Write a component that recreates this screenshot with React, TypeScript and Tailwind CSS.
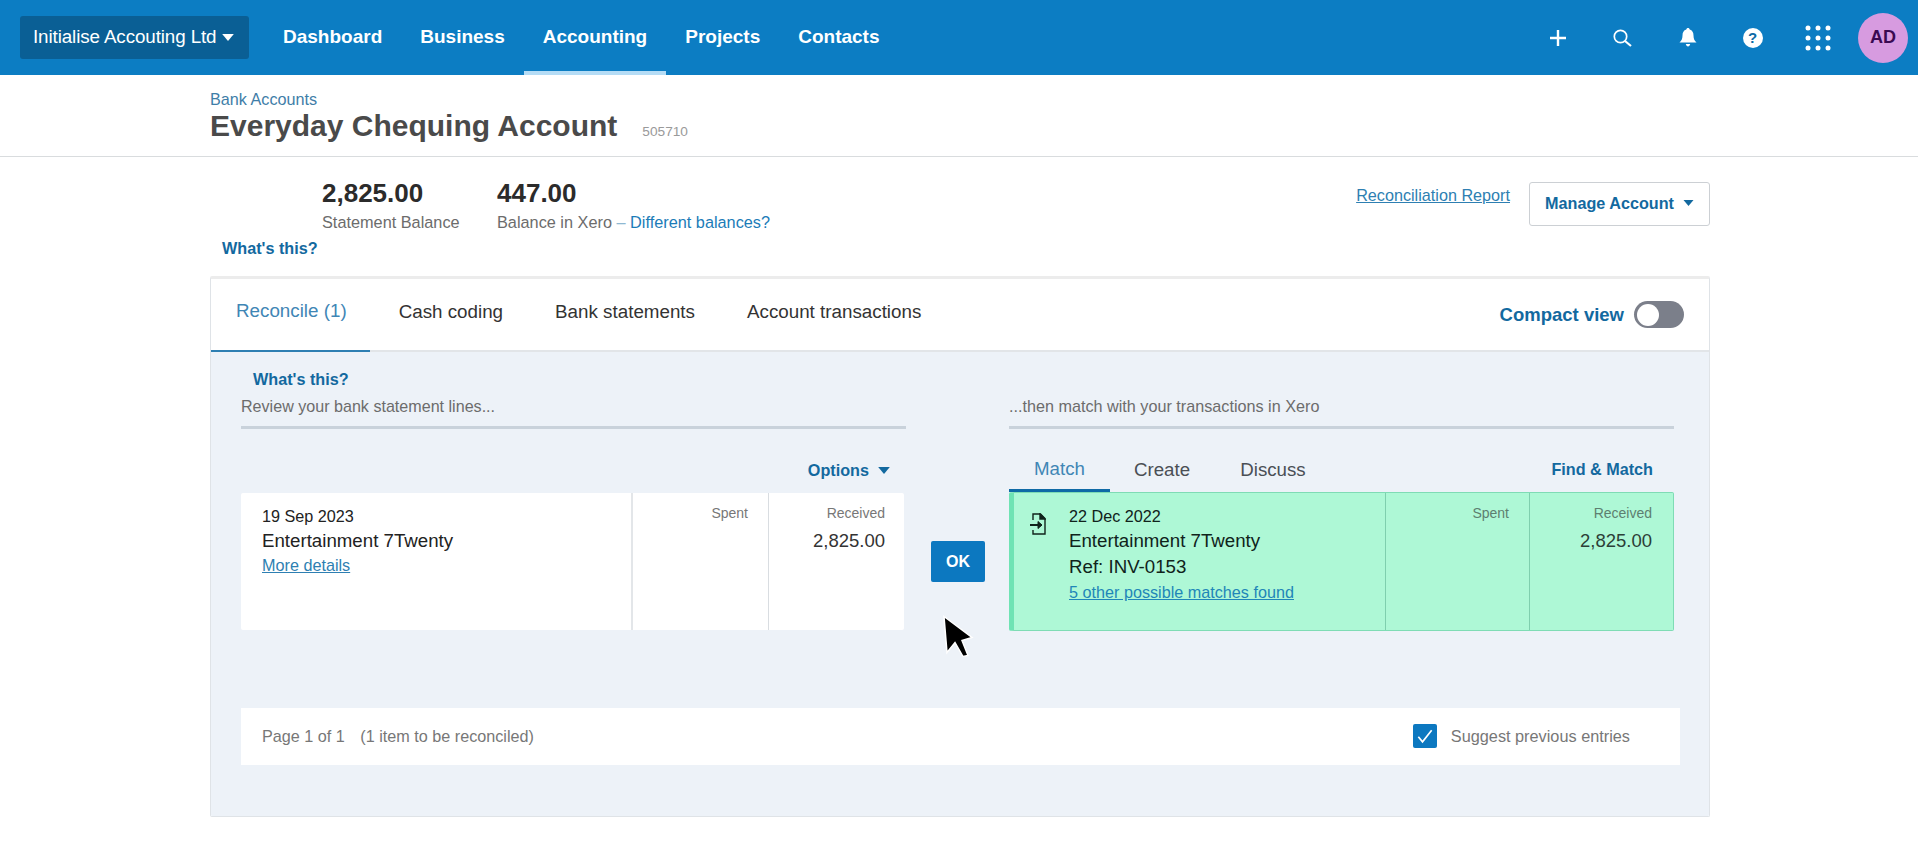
const font = "font-['Liberation_Sans',Arial,sans-serif]";

function Caret({ className }: { className: string }) {
  return (
    <svg viewBox="0 0 10 6" className={className} fill="currentColor">
      <path d="M0 0h10L5 6z" />
    </svg>
  );
}

function PlusIcon() {
  return (
    <svg viewBox="0 0 16 16" className="h-4 w-4" stroke="#fff" strokeWidth="2.4">
      <path d="M8 0v16M0 8h16" />
    </svg>
  );
}

function SearchIcon() {
  return (
    <svg viewBox="0 0 20 18" className="h-[18px] w-5" fill="none" stroke="#fff">
      <circle cx="7.5" cy="7.5" r="6.200" strokeWidth="1.700" />
      <path d="M12 12l6 5" strokeWidth="2.200" />
    </svg>
  );
}

function BellIcon() {
  return (
    <svg viewBox="0 0 18 19" className="h-[19px] w-[18px]" fill="#fff">
      <path d="M9 0c1 0 1.6.6 1.7 1.6C13.300 2.400 14.500 4.600 14.500 7.500c0 3 .8 5 3 7H.5c2.200-2 3-4 3-7 0-2.900 1.200-5.100 3.800-5.900C7.400.6 8 0 9 0z" />
      <path d="M6.800 16h4.400c-.3 1.500-1.100 2.500-2.200 2.500S7.100 17.500 6.800 16z" />
    </svg>
  );
}

function HelpIcon() {
  return (
    <div className="flex h-[20px] w-[20px] items-center justify-center rounded-full bg-white text-[15px] font-bold leading-none text-[#0c6aa6]">
      ?
    </div>
  );
}

function GridDots() {
  const dots = [3, 13, 23];
  return (
    <svg viewBox="0 0 26 26" className="h-[26px] w-[26px]" fill="#fff">
      {dots.map((y) =>
        dots.map((x) => <circle key={`${x}-${y}`} cx={x} cy={y} r="2.5" />)
      )}
    </svg>
  );
}

function TopNav() {
  const items = ["Dashboard", "Business", "Accounting", "Projects", "Contacts"];
  return (
    <header className="flex h-[75px] items-center bg-[#0c7dc3] pl-5 pr-[10px] text-white">
      <button className="flex h-[43px] w-[229px] items-center gap-[6px] rounded-[3px] bg-[#0a5f95] pl-[13px] text-[18.800px] tracking-[-0.1px]">
        <span>Initialise Accouting Ltd</span>
        <Caret className="h-[7px] w-[12px]" />
      </button>
      <nav className="ml-[15px] flex h-full">
        {items.map((item) => (
          <a
            key={item}
            className={`flex h-full items-center border-b-4 px-[19px] pt-1 text-[19px] font-bold ${
              item === "Accounting" ? "border-[#b5dcf5]" : "border-transparent"
            }`}
          >
            {item}
          </a>
        ))}
      </nav>
      <div className="ml-auto flex items-center">
        <div className="flex w-[65px] justify-center">
          <PlusIcon />
        </div>
        <div className="flex w-[65px] justify-center">
          <SearchIcon />
        </div>
        <div className="flex w-[65px] justify-center">
          <BellIcon />
        </div>
        <div className="flex w-[65px] justify-center">
          <HelpIcon />
        </div>
        <div className="flex w-[65px] justify-center">
          <GridDots />
        </div>
        <div className="ml-[8px] flex h-[50px] w-[50px] items-center justify-center rounded-full bg-[#d79be0] text-[18px] font-bold text-[#3a0a52]">
          AD
        </div>
      </div>
    </header>
  );
}

function PageTitle() {
  return (
    <div className="h-[82px] border-b border-[#d9dcde] pl-[210px] pt-[14px]">
      <a className="block text-[16.200px] leading-[20px] text-[#3f7ea8]">Bank Accounts</a>
      <div className="-mt-[1px] flex items-baseline">
        <h1 className="text-[30px] font-bold leading-[36px] text-[#4a4a4a]">Everyday Chequing Account</h1>
        <span className="ml-[25px] text-[13.700px] text-[#9a9a9a]">505710</span>
      </div>
    </div>
  );
}

function Balances() {
  return (
    <div className="mx-[208px] flex h-[119px] justify-between pl-[2px]">
      <div>
        <div className="ml-[112px] flex pt-[22px]">
          <div className="w-[175px]">
            <div className="text-[26px] font-bold leading-[28px] text-[#2b2b2b]">2,825.00</div>
            <div className="mt-[5px] text-[16.300px] leading-[20px] text-[#6c6c6c]">Statement Balance</div>
          </div>
          <div>
            <div className="text-[26px] font-bold leading-[28px] text-[#2b2b2b]">447.00</div>
            <div className="mt-[5px] text-[16.300px] leading-[20px] text-[#6c6c6c]">
              Balance in Xero <span className="text-[#8fb8d2]">–</span>{" "}
              <a className="text-[#1b7cb8]">Different balances?</a>
            </div>
          </div>
        </div>
        <a className="ml-[12px] mt-[6px] block text-[16.200px] font-bold leading-[20px] text-[#13699f]">What's this?</a>
      </div>
      <div className="flex items-start pt-[25px]">
        <a className="mt-[3px] text-[16.200px] leading-[20px] text-[#2e7fb2] underline">Reconciliation Report</a>
        <button className="ml-[19px] flex h-[44px] w-[181px] items-center justify-center gap-[9px] rounded-[3px] border-[1.500px] border-[#ccd0d4] bg-white pb-[2px] text-[16.200px] font-bold text-[#13699f]">
          Manage Account
          <Caret className="h-[6px] w-[11px]" />
        </button>
      </div>
    </div>
  );
}

function Tabs() {
  const tabs = ["Reconcile (1)", "Cash coding", "Bank statements", "Account transactions"];
  return (
    <div className="flex h-[73px] items-stretch border-b-2 border-[#e2e5e8] bg-white">
      {tabs.map((t, i) => (
        <a
          key={t}
          className={`-mb-[2px] flex items-center pb-[6px] text-[18.800px] ${
            i === 0
              ? "mr-[3px] border-b-2 border-[#2e7fb2] pl-[25px] pr-[23px] text-[#3f86b5]"
              : "px-[26px] text-[#333]"
          }`}
        >
          {t}
        </a>
      ))}
      <div className="ml-auto flex items-center pr-[25px]">
        <span className="text-[18.500px] font-bold text-[#13699f]">Compact view</span>
        <div className="ml-[10px] flex h-[27px] w-[50px] items-center rounded-full bg-[#7b7f8a] pl-[3px]">
          <div className="h-[22px] w-[22px] rounded-full bg-white" />
        </div>
      </div>
    </div>
  );
}

function StatementLine() {
  return (
    <div className="flex h-[137px] w-[663px] rounded-[2px] bg-white">
      <div className="w-[390px] pl-[21px] pt-[11px]">
        <div className="text-[16.200px] leading-[24px] text-[#222]">19 Sep 2023</div>
        <div className="text-[18.700px] leading-[25px] text-[#222]">Entertainment 7Twenty</div>
        <a className="text-[16.200px] leading-[24px] text-[#2e7fb2] underline">More details</a>
      </div>
      <div className="w-[137px] border-l-2 border-[#e3e6e9] pr-5 pt-[9px] text-right text-[14px] leading-[22px] text-[#777]">
        Spent
      </div>
      <div className="flex-1 border-l border-[#d9dde1] pr-[19px] pt-[9px] text-right">
        <div className="text-[14px] leading-[22px] text-[#777]">Received</div>
        <div className="mt-[4px] text-[18.500px] leading-[26px] text-[#333]">2,825.00</div>
      </div>
    </div>
  );
}

function MatchIcon() {
  return (
    <svg viewBox="0 0 16 22" className="h-[22px] w-4" fill="none" stroke="#10231b" strokeWidth="1.4">
      <path d="M3 7V1h7.500L15 5.500V21H3v-4" />
      <path d="M10 1l5 5h-5z" fill="#10231b" />
      <path d="M0 12h8" strokeWidth="2" />
      <path d="M8 8.500l4 3.500-4 3.500z" fill="#10231b" strokeWidth="1" />
    </svg>
  );
}

function MatchLine() {
  return (
    <div className="flex h-[139px] rounded-[2px] border border-[#7fdcb5] border-l-[5px] border-l-[#6fe3b4] bg-[#aef8d6]">
      <div className="flex w-[371px] pl-[16px] pt-[11px]">
        <div className="w-[39px] pt-[9px]">
          <MatchIcon />
        </div>
        <div>
          <div className="text-[16.200px] leading-[24px] text-[#10231b]">22 Dec 2022</div>
          <div className="text-[18.700px] leading-[26px] text-[#10231b]">Entertainment 7Twenty</div>
          <div className="text-[18.700px] leading-[25px] text-[#10231b]">Ref: INV-0153</div>
          <a className="text-[16.200px] leading-[26px] text-[#1f86b8] underline">5 other possible matches found</a>
        </div>
      </div>
      <div className="w-[144px] border-l border-[#7fcfae] pr-[20px] pt-[9px] text-right text-[14px] leading-[22px] text-[#5d7f70]">
        Spent
      </div>
      <div className="flex-1 border-l border-[#7fcfae] pr-[21px] pt-[9px] text-right">
        <div className="text-[14px] leading-[22px] text-[#5d7f70]">Received</div>
        <div className="mt-[4px] text-[18.500px] leading-[26px] text-[#2c3f37]">2,825.00</div>
      </div>
    </div>
  );
}

function Footer() {
  return (
    <div className="mt-[77px] flex h-[57px] w-[1439px] items-center justify-between bg-white pb-[1px] pl-[21px] pr-[50px]">
      <span className="text-[16.200px] text-[#777]">
        Page 1 of 1 <span className="ml-[11px]">(1 item to be reconciled)</span>
      </span>
      <label className="flex items-center">
        <span className="flex h-[24px] w-[24px] items-center justify-center rounded-[2px] bg-[#0c78c0]">
          <svg viewBox="0 0 24 24" className="h-[20px] w-[20px]" fill="none" stroke="#fff" strokeWidth="2">
            <path d="M4 13l5 6L20 5" />
          </svg>
        </span>
        <span className="ml-[14px] text-[16.300px] text-[#777]">Suggest previous entries</span>
      </label>
    </div>
  );
}

function ReconcileBody() {
  return (
    <div className="relative h-[464px] bg-[#edf2f8] pl-[30px] pt-[16px]">
      <div className="flex">
        <div className="w-[665px]">
          <a className="ml-[12px] block text-[16.200px] font-bold leading-[22px] text-[#13699f]">What's this?</a>
          <div className="h-[39px] border-b-[3px] border-[#c9d2db] pt-[5px] text-[16.100px] leading-[22px] text-[#6c6c6c]">
            Review your bank statement lines...
          </div>
          <div className="flex h-[64px] items-center justify-end gap-[9px] pr-[16px] pt-[19px] text-[16.200px] font-bold text-[#13699f]">
            Options
            <Caret className="h-[7px] w-[12px]" />
          </div>
          <StatementLine />
        </div>
        <div className="w-[103px] pl-[25px] pt-[173px]">
          <button className="h-[41px] w-[54px] rounded-[2px] bg-[#0c78c0] text-[16px] font-bold text-white">OK</button>
        </div>
        <div className="w-[665px]">
          <div className="h-[61px] border-b-[3px] border-[#c9d2db] pt-[27px] text-[16.200px] leading-[22px] text-[#6c6c6c]">
            ...then match with your transactions in Xero
          </div>
          <div className="flex h-[63px] items-end justify-between pr-[21px]">
            <div className="flex text-[18.700px] text-[#4a4f55]">
              <a className="flex h-[42px] w-[101px] items-center justify-center border-b-[3px] border-[#0f6aa6] pb-[1px] text-[#3f86b5]">Match</a>
              <a className="flex h-[42px] w-[104px] items-center justify-center pb-[1px]">Create</a>
              <a className="flex h-[42px] w-[118px] items-center justify-center pb-[1px]">Discuss</a>
            </div>
            <a className="flex h-[42px] items-center pb-[3px] text-[16.200px] font-bold text-[#13699f]">Find &amp; Match</a>
          </div>
          <MatchLine />
        </div>
      </div>
      <Footer />
      {/* mouse pointer from the recording */}
      <svg viewBox="0 0 34 46" className="absolute left-[731px] top-[261px] h-[47px] w-[34px]" fill="#000" stroke="#fff" strokeWidth="1.500">
        <path d="M2 3l28 21-10 3 6 15-5 1-8-14-8 10z" />
      </svg>
    </div>
  );
}

export default function App() {
  return (
    <div className={`h-[856px] w-full overflow-hidden bg-white ${font}`}>
      <TopNav />
      <PageTitle />
      <Balances />
      <section className="mx-[210px] w-[1500px] overflow-hidden rounded-[2px] border border-t-[3px] border-[#dfe3e7] border-t-[#ececec]">
        <Tabs />
        <ReconcileBody />
      </section>
    </div>
  );
}
